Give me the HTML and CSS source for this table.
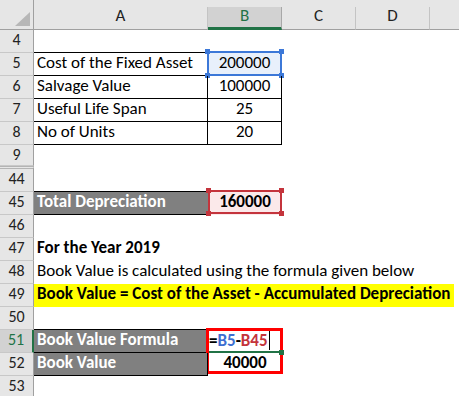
FILE: index.html
```html
<!DOCTYPE html>
<html>
<head>
<meta charset="utf-8">
<link rel="stylesheet" href="styles.css">
</head>
<body>
<div class="sheet">
  <div class="row hdr">
    <div class="corner"><div class="tri"></div></div>
    <div class="ch">A</div>
    <div class="ch on">B</div>
    <div class="ch">C</div>
    <div class="ch">D</div>
    <div class="ch last"></div>
  </div>
  <div class="row"><div class="rh">4</div><div class="c bb"></div><div class="c bb"></div><div class="c"></div><div class="c"></div><div class="c"></div></div>
  <div class="row"><div class="rh">5</div><div class="c bb br">Cost of the Fixed Asset</div><div class="c bb br ctr bluefill">200000<div class="selbox blue"><span class="h tl"></span><span class="h tr"></span><span class="h bl"></span><span class="h br2"></span></div></div><div class="c"></div><div class="c"></div><div class="c"></div></div>
  <div class="row"><div class="rh">6</div><div class="c bb br">Salvage Value</div><div class="c bb br ctr">100000</div><div class="c"></div><div class="c"></div><div class="c"></div></div>
  <div class="row"><div class="rh">7</div><div class="c bb br">Useful Life Span</div><div class="c bb br ctr">25</div><div class="c"></div><div class="c"></div><div class="c"></div></div>
  <div class="row"><div class="rh">8</div><div class="c bb br">No of Units</div><div class="c bb br ctr">20</div><div class="c"></div><div class="c"></div><div class="c"></div></div>
  <div class="row r9"><div class="rh">9</div><div class="c"></div><div class="c"></div><div class="c"></div><div class="c"></div><div class="c"></div></div>
  <div class="row r44"><div class="rh">44</div><div class="c bb"></div><div class="c"></div><div class="c"></div><div class="c"></div><div class="c"></div></div>
  <div class="row"><div class="rh">45</div><div class="c bb gray">Total Depreciation</div><div class="c ctr bold pinkfill">160000<div class="selbox red"><span class="h tl"></span><span class="h tr"></span><span class="h bl"></span><span class="h br2"></span></div></div><div class="c"></div><div class="c"></div><div class="c"></div></div>
  <div class="row"><div class="rh">46</div><div class="c"></div><div class="c"></div><div class="c"></div><div class="c"></div><div class="c"></div></div>
  <div class="row"><div class="rh">47</div><div class="c bold">For the Year 2019</div><div class="c"></div><div class="c"></div><div class="c"></div><div class="c"></div></div>
  <div class="row"><div class="rh">48</div><div class="c wide">Book Value is calculated using the formula given below</div></div>
  <div class="row"><div class="rh">49</div><div class="c wide bold hl">Book Value = Cost of the Asset - Accumulated Depreciation</div></div>
  <div class="row"><div class="rh">50</div><div class="c bb"></div><div class="c"></div><div class="c"></div><div class="c"></div><div class="c"></div></div>
  <div class="row"><div class="rh on">51</div><div class="c bb br gray">Book Value Formula</div><div class="c bold formula"><span>=</span><span class="rb">B5</span><span>-</span><span class="rr">B45</span><span class="caret"></span><div class="redbox"></div><div class="gline"></div><div class="gsq"></div></div><div class="c"></div><div class="c"></div><div class="c"></div></div>
  <div class="row"><div class="rh">52</div><div class="c bb br gray">Book Value</div><div class="c ctr bold">40000</div><div class="c"></div><div class="c"></div><div class="c"></div></div>
  <div class="row"><div class="rh">53</div><div class="c"></div><div class="c"></div><div class="c"></div><div class="c"></div><div class="c"></div></div>
</div>
</body>
</html>
```
FILE: styles.css
```css
* { box-sizing: border-box; }
html, body { margin: 0; padding: 0; }
body {
  width: 459px;
  height: 396px;
  overflow: hidden;
  background: #ffffff;
  font-family: Carlito, Lato, "Open Sans", sans-serif;
  font-size: 17px;
  color: #000;
}
.row {
  display: grid;
  grid-template-columns: 34px 174px 74px 74px 74px 1fr;
  height: 23px;
}
.hdr { height: 30px; background: #e6e6e6; }
.corner {
  border-right: 1px solid #a0a0a0;
  border-bottom: 1px solid #a0a0a0;
  display: flex;
  align-items: flex-end;
  justify-content: flex-end;
  padding: 0 3px 3px 0;
}
.tri {
  width: 15px;
  height: 14px;
  background: #b7b7b7;
  clip-path: polygon(100% 0, 100% 100%, 0 100%);
}
.ch {
  align-self: end;
  height: 23px;
  border-right: 1px solid #c4c4c4;
  border-bottom: 1px solid #a0a0a0;
  text-align: center;
  line-height: 18px;
  color: #222;
}
.ch.on {
  background: #d2d2d2;
  color: #217346;
  border-right-color: #a8a8a8;
  border-bottom: 3px solid #217346;
}
.ch.last { border-right: none; }
.rh {
  background: #e6e6e6;
  border-right: 1px solid #a0a0a0;
  border-bottom: 1px solid #c8c8c8;
  text-align: center;
  font-size: 16px;
  line-height: 19px;
  color: #222;
}
.rh.on {
  background: #d2d2d2;
  color: #217346;
  border-right: 2px solid #217346;
}
.r9 { height: 21px; }
.r44 { height: 26px; }
.r44 .rh { border-top: 3px double #b4b4b4; line-height: 19px; }
.c {
  position: relative;
  padding: 0 3px;
  line-height: 20px;
  white-space: nowrap;
}
.bb { border-bottom: 1px solid #000; }
.br { border-right: 1px solid #000; }
.ctr { text-align: center; }
.bold { font-weight: bold; }
.gray { background: #808080; color: #fff; font-weight: bold; }
.bluefill { background: #e8f0fb; }
.pinkfill { background: #fbe9ea; }
.wide { grid-column: 2 / -1; }
.hl { background: #ffff00; justify-self: start; width: 420px; }
.selbox {
  position: absolute;
  border: 2px solid;
}
.selbox.blue { border-color: #3c78d8; left: -1px; top: -2px; right: -1px; bottom: -1px; }
.selbox.red { border-color: #c4343c; left: 0; top: -2px; right: 0; bottom: 1px; }
.h { position: absolute; width: 5px; height: 5px; }
.blue .h { background: #3c78d8; }
.red .h { background: #c4343c; }
.h.tl { left: -4px; top: -4px; }
.h.tr { right: -4px; top: -4px; }
.h.bl { left: -4px; bottom: -4px; }
.h.br2 { right: -4px; bottom: -4px; }
.formula { padding-left: 1px; }
.rb { color: #3d6fd1; }
.rr { color: #c4343c; }
.caret {
  display: inline-block;
  width: 1px;
  height: 20px;
  margin-left: 1px;
  background: #000;
  vertical-align: -4px;
}
.redbox {
  position: absolute;
  left: -2px;
  top: -2px;
  width: 77px;
  height: 46px;
  border: 3px solid #ff0000;
}
.gline {
  position: absolute;
  left: 1px;
  right: 3px;
  bottom: 0;
  height: 2px;
  background: #217346;
}
.gsq {
  position: absolute;
  right: -2px;
  bottom: -2px;
  width: 5px;
  height: 5px;
  background: #217346;
}
```
